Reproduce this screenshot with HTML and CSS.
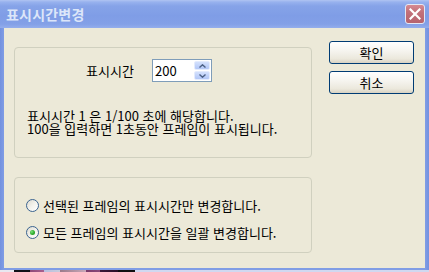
FILE: index.html
```html
<!DOCTYPE html>
<html lang="ko">
<head>
<meta charset="utf-8">
<link rel="stylesheet" href="styles.css">
</head>
<body>
<div class="window">
  <div class="titlebar">
    <span class="title">표시시간변경</span>
    <span class="close">
      <svg width="12" height="12" viewBox="0 0 12 12"><path d="M1.5 1.5 L10.5 10.5 M10.5 1.5 L1.5 10.5" stroke="#fff" stroke-width="2.2" stroke-linecap="square" fill="none"/></svg>
    </span>
  </div>
  <div class="client">
    <div class="main">
      <div class="group g1">
        <div class="row">
          <span class="label">표시시간</span>
          <div class="spin">
            <span class="val">200</span>
            <div class="spinbtns">
              <span class="sb"><svg width="7" height="4" viewBox="0 0 7 4"><path d="M0.5 3.5 L3.5 0.8 L6.5 3.5" stroke="#4d6185" stroke-width="1.4" fill="none"/></svg></span>
              <span class="sb"><svg width="7" height="4" viewBox="0 0 7 4"><path d="M0.5 0.5 L3.5 3.2 L6.5 0.5" stroke="#4d6185" stroke-width="1.4" fill="none"/></svg></span>
            </div>
          </div>
        </div>
        <div class="note">
          <div class="line">표시시간 1 은 1/100 초에 해당합니다.</div>
          <div class="line">100을 입력하면 1초동안 프레임이 표시됩니다.</div>
        </div>
      </div>
      <div class="group g2">
        <div class="radio"><span class="circle"></span><span>선택된 프레임의 표시시간만 변경합니다.</span></div>
        <div class="radio"><span class="circle checked"></span><span>모든 프레임의 표시시간을 일괄 변경합니다.</span></div>
      </div>
    </div>
    <div class="side">
      <div class="btn">확인</div>
      <div class="btn">취소</div>
    </div>
  </div>
</div>
<div class="desktop"></div>
</body>
</html>
```

FILE: styles.css
```css
html, body {
  margin: 0;
  padding: 0;
  background: #2a1a30;
}
body {
  font-family: "Noto Sans CJK KR", "Noto Sans", sans-serif;
  font-size: 13px;
  color: #000;
  width: 429px;
  height: 272px;
  overflow: hidden;
}
.window {
  width: 429px;
  height: 270px;
  display: flex;
  flex-direction: column;
  background: linear-gradient(90deg, #7391df 0, #809de5 4px, #809de5 425px, #7391df 429px);
}
.titlebar {
  height: 28px;
  flex: none;
  display: flex;
  align-items: center;
  padding: 0 4px 0 6px;
  background: linear-gradient(180deg, #b0c4f2 0, #98b2ee 2px, #86a3e8 6px, #7f9de6 16px, #83a0e7 24px, #94aeec 28px);
}
.title {
  font-weight: bold;
  font-size: 14px;
  color: #dce6f9;
  letter-spacing: 0.2px;
}
.close {
  margin-left: auto;
  width: 20px;
  height: 20px;
  box-sizing: border-box;
  border: 1px solid #e4e8f4;
  border-radius: 3px;
  background: linear-gradient(180deg, #d68a92 0, #c2707a 40%, #b6636e 100%);
  display: flex;
  align-items: center;
  justify-content: center;
}
.close svg { display: block; }
.client {
  flex: 1;
  margin: 0 4px 2px 4px;
  background: #ece9d8;
  display: flex;
  padding: 13px 0 0 10px;
}
.main {
  width: 298px;
  padding-top: 6px;
  display: flex;
  flex-direction: column;
  gap: 19px;
}
.group {
  box-sizing: border-box;
  border: 1px solid #d0d0bf;
  border-radius: 4px;
}
.g1 {
  height: 111px;
  padding: 11px 0 0 12px;
}
.g2 {
  height: 76px;
  padding: 21px 0 0 11px;
  display: flex;
  flex-direction: column;
  gap: 14px;
}
.row {
  display: flex;
  align-items: center;
  height: 23px;
  padding-left: 59px;
}
.label {
  width: 66px;
}
.spin {
  width: 60px;
  height: 23px;
  box-sizing: border-box;
  border: 1px solid #7f9db9;
  background: #fff;
  display: flex;
}
.val {
  flex: 1;
  padding-left: 2px;
  line-height: 21px;
}
.spinbtns {
  width: 16px;
  margin: 1px 1px 1px 0;
  display: flex;
  flex-direction: column;
  gap: 1px;
}
.sb {
  flex: 1;
  box-sizing: border-box;
  border: 1px solid #e3ebfd;
  border-radius: 2px;
  background: linear-gradient(180deg, #d3e0fc 0, #bfd1fa 60%, #b2c7f6 100%);
  display: flex;
  align-items: center;
  justify-content: center;
}
.sb svg { display: block; }
.note {
  margin-top: 27px;
  display: flex;
  flex-direction: column;
}
.line {
  height: 13px;
  line-height: 13px;
  white-space: nowrap;
}
.radio {
  display: flex;
  align-items: center;
  height: 13px;
}
.circle {
  width: 13px;
  height: 13px;
  box-sizing: border-box;
  border: 1px solid #3a6390;
  border-radius: 50%;
  background: linear-gradient(135deg, #dcdad0 0, #f3f2ec 50%, #ffffff 100%);
  margin-right: 4px;
  flex: none;
  display: flex;
  align-items: center;
  justify-content: center;
}
.circle.checked::after {
  content: "";
  width: 5px;
  height: 5px;
  border-radius: 50%;
  background: radial-gradient(circle at 35% 35%, #7ee07e 0, #30b030 50%, #1c8c1c 100%);
}
.side {
  margin-left: 17px;
  display: flex;
  flex-direction: column;
  gap: 7px;
}
.btn {
  width: 85px;
  height: 23px;
  box-sizing: border-box;
  border: 1px solid #003c74;
  border-radius: 3px;
  background: linear-gradient(180deg, #ffffff 0, #f6f5f0 40%, #ebe8dc 80%, #d8d2c2 100%);
  display: flex;
  align-items: center;
  justify-content: center;
}
.desktop {
  height: 2px;
  background: linear-gradient(90deg, #e8e8f0 0, #e8e8f0 14px, #101018 14px, #101018 30px, #8c4a78 30px, #a86090 44px, #b8bfe0 44px, #c8ccdc 60px, #9a7a8a 60px, #c8a8b8 86px, #7a3a6a 86px, #8a4a7a 100px, #3a1a38 100px, #2a1028 118px, #101010 118px, #101010 135px, #d0d8f0 135px);
}
```
